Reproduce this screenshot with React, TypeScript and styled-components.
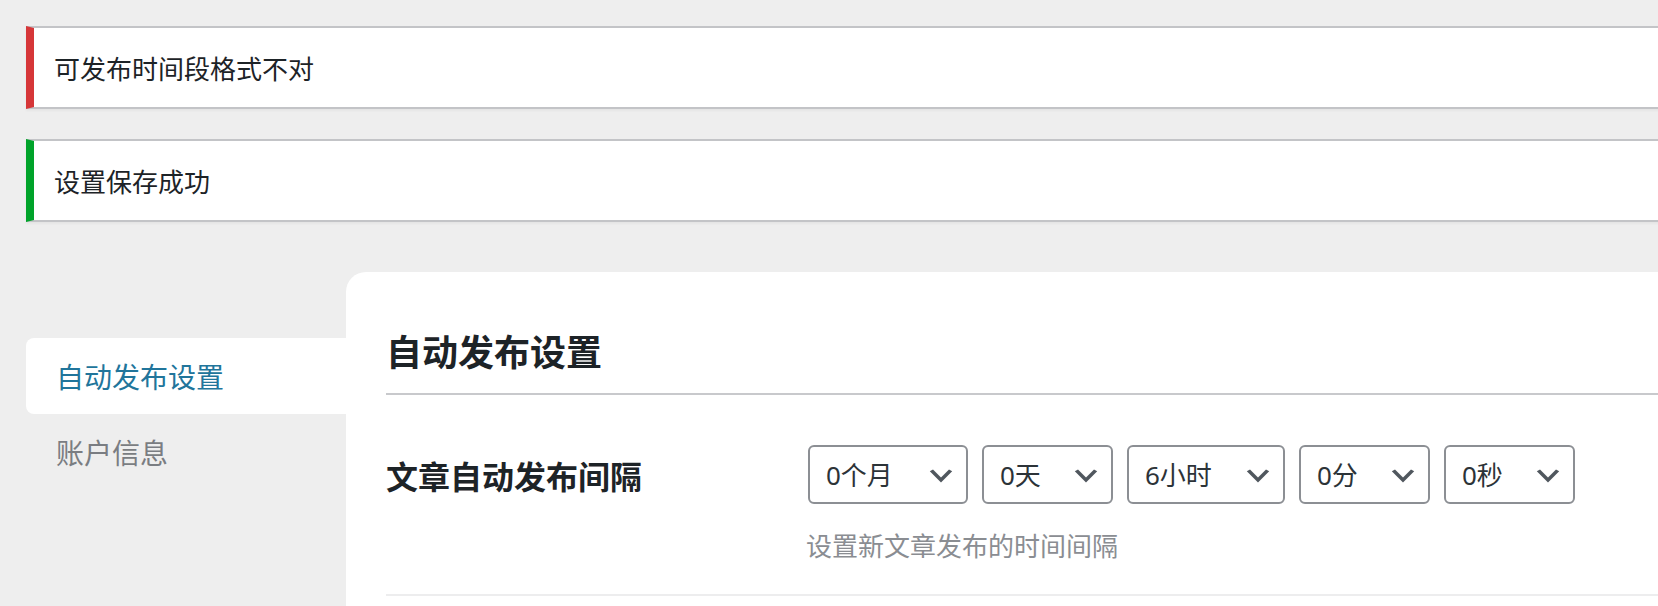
import React from "react";
import styled, { createGlobalStyle } from "styled-components";

const GlobalStyle = createGlobalStyle`
  html, body {
    margin: 0;
    padding: 0;
    overflow: hidden;
    background: #eeeeee;
  }
  body {
    font-family: "Noto Sans", "Noto Sans CJK SC", sans-serif;
    color: #1d2327;
  }
`;

const Page = styled.div`
  width: 1720px;
  padding: 26px 0 0 26px;
  box-sizing: border-box;
`;

const Notice = styled.div<{ $accent: string }>`
  display: flex;
  align-items: center;
  height: 83px;
  box-sizing: border-box;
  padding: 0 20px;
  background: #fff;
  border: 2px solid #c3c4c7;
  border-left: 8px solid ${(p) => p.$accent};
  box-shadow: 0 2px 2px rgba(0, 0, 0, 0.04);
  font-family: "Noto Sans CJK SC", sans-serif;
  font-size: 26px;
  line-height: 36px;
  color: #1d2327;
  & + & {
    margin-top: 30px;
  }
`;

const Layout = styled.div`
  display: flex;
  margin-top: 50px;
  align-items: stretch;
`;

const Nav = styled.nav`
  width: 320px;
  flex: none;
  padding-top: 66px;
  display: flex;
  flex-direction: column;
`;

const Tab = styled.div<{ $active?: boolean }>`
  height: 76px;
  display: flex;
  align-items: center;
  padding-left: 30px;
  font-family: "Noto Sans CJK SC", sans-serif;
  font-weight: 400;
  font-size: 28px;
  color: ${(p) => (p.$active ? "#21759b" : "#7a7d82")};
  background: ${(p) => (p.$active ? "#fff" : "transparent")};
  border-radius: 8px 0 0 8px;
`;

const Card = styled.section`
  flex: 1;
  background: #fff;
  border-top-left-radius: 20px;
  padding-left: 40px;
  min-height: 360px;
`;

const Title = styled.h2`
  margin: 54px 0 0;
  padding-bottom: 19px;
  font-family: "Noto Sans CJK SC", sans-serif;
  font-size: 36px;
  line-height: 48px;
  font-weight: 700;
  color: #1d2327;
  border-bottom: 2px solid #c8c9cc;
`;

const Row = styled.div`
  display: flex;
  padding: 50px 0 31px;
  border-bottom: 2px solid #ededee;
`;

const Label = styled.div`
  width: 422px;
  flex: none;
  font-family: "Noto Sans CJK SC", sans-serif;
  font-size: 32px;
  font-weight: 700;
  line-height: 61px;
  color: #1d2327;
`;

const Field = styled.div`
  display: flex;
  flex-direction: column;
`;

const Selects = styled.div`
  display: flex;
  gap: 14px;
`;

const SelectBox = styled.div<{ $w: number }>`
  width: ${(p) => p.$w}px;
  height: 59px;
  box-sizing: border-box;
  display: flex;
  align-items: center;
  justify-content: space-between;
  padding: 0 9px 0 16px;
  border: 2px solid #8c8f94;
  border-radius: 6px;
  background: #fff;
  font-size: 26px;
  color: #2c3338;
  line-height: 36px;
`;

const Chevron = styled.svg`
  width: 32px;
  height: 32px;
  margin-top: 3px;
  fill: #50575e;
  flex: none;
`;

const Description = styled.p`
  margin: 23px 0 0 -2px;
  font-family: "Noto Sans CJK SC", sans-serif;
  font-size: 26px;
  line-height: 36px;
  color: #8a8d92;
`;

const selects = [
  { label: "0个月", w: 160 },
  { label: "0天", w: 131 },
  { label: "6小时", w: 158 },
  { label: "0分", w: 131 },
  { label: "0秒", w: 131 },
];

export default function App() {
  return (
    <>
      <GlobalStyle />
      <Page>
        <Notice $accent="#d63638">可发布时间段格式不对</Notice>
        <Notice $accent="#00a32a">设置保存成功</Notice>
        <Layout>
          <Nav>
            <Tab $active>自动发布设置</Tab>
            <Tab>账户信息</Tab>
          </Nav>
          <Card>
            <Title>自动发布设置</Title>
            <Row>
              <Label>文章自动发布间隔</Label>
              <Field>
                <Selects>
                  {selects.map((s) => (
                    <SelectBox key={s.label} $w={s.w}>
                      <span>{s.label}</span>
                      <Chevron viewBox="0 0 20 20">
                        <path d="M5 6l5 5 5-5 2 1-7 7-7-7 2-1z" />
                      </Chevron>
                    </SelectBox>
                  ))}
                </Selects>
                <Description>设置新文章发布的时间间隔</Description>
              </Field>
            </Row>
          </Card>
        </Layout>
      </Page>
    </>
  );
}
